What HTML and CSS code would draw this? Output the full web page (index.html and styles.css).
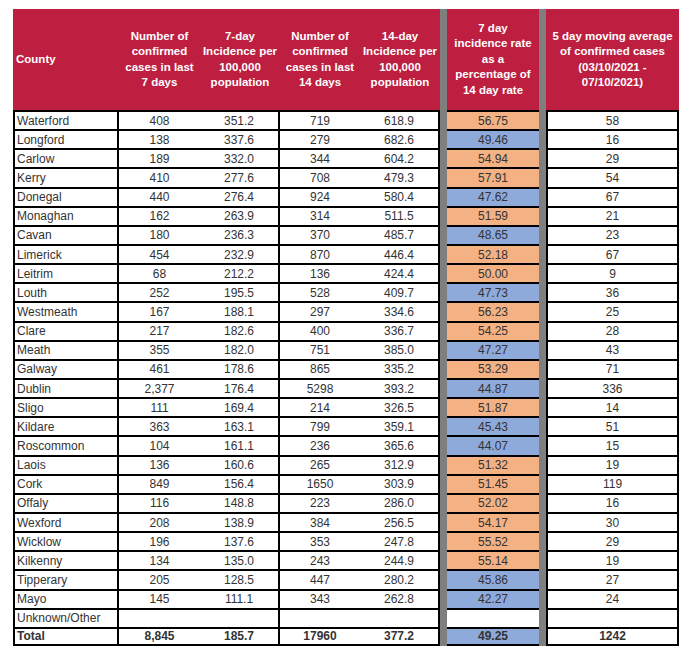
FILE: index.html
```html
<!DOCTYPE html>
<html>
<head>
<meta charset="utf-8">
<link rel="stylesheet" href="styles.css">
</head>
<body>
<div class="tbl">
  <div class="h hc">County</div>
  <div class="h">Number of<br>confirmed<br>cases in last<br>7 days</div>
  <div class="h">7-day<br>Incidence per<br>100,000<br>population</div>
  <div class="h">Number of<br>confirmed<br>cases in last<br>14 days</div>
  <div class="h">14-day<br>Incidence per<br>100,000<br>population</div>
  <div class="sep s1"></div>
  <div class="h">7 day<br>incidence rate<br>as a<br>percentage of<br>14 day rate</div>
  <div class="sep s2"></div>
  <div class="h">5 day moving average<br>of confirmed cases<br>(03/10/2021 -<br>07/10/2021)</div>

  <div class="c">Waterford</div><div class="n">408</div><div class="n b3">351.2</div><div class="n">719</div><div class="n b5">618.9</div><div class="p o">56.75</div><div class="a">58</div>
  <div class="c">Longford</div><div class="n">138</div><div class="n b3">337.6</div><div class="n">279</div><div class="n b5">682.6</div><div class="p u">49.46</div><div class="a">16</div>
  <div class="c">Carlow</div><div class="n">189</div><div class="n b3">332.0</div><div class="n">344</div><div class="n b5">604.2</div><div class="p o">54.94</div><div class="a">29</div>
  <div class="c">Kerry</div><div class="n">410</div><div class="n b3">277.6</div><div class="n">708</div><div class="n b5">479.3</div><div class="p o">57.91</div><div class="a">54</div>
  <div class="c">Donegal</div><div class="n">440</div><div class="n b3">276.4</div><div class="n">924</div><div class="n b5">580.4</div><div class="p u">47.62</div><div class="a">67</div>
  <div class="c">Monaghan</div><div class="n">162</div><div class="n b3">263.9</div><div class="n">314</div><div class="n b5">511.5</div><div class="p o">51.59</div><div class="a">21</div>
  <div class="c">Cavan</div><div class="n">180</div><div class="n b3">236.3</div><div class="n">370</div><div class="n b5">485.7</div><div class="p u">48.65</div><div class="a">23</div>
  <div class="c">Limerick</div><div class="n">454</div><div class="n b3">232.9</div><div class="n">870</div><div class="n b5">446.4</div><div class="p o">52.18</div><div class="a">67</div>
  <div class="c">Leitrim</div><div class="n">68</div><div class="n b3">212.2</div><div class="n">136</div><div class="n b5">424.4</div><div class="p o">50.00</div><div class="a">9</div>
  <div class="c">Louth</div><div class="n">252</div><div class="n b3">195.5</div><div class="n">528</div><div class="n b5">409.7</div><div class="p u">47.73</div><div class="a">36</div>
  <div class="c">Westmeath</div><div class="n">167</div><div class="n b3">188.1</div><div class="n">297</div><div class="n b5">334.6</div><div class="p o">56.23</div><div class="a">25</div>
  <div class="c">Clare</div><div class="n">217</div><div class="n b3">182.6</div><div class="n">400</div><div class="n b5">336.7</div><div class="p o">54.25</div><div class="a">28</div>
  <div class="c">Meath</div><div class="n">355</div><div class="n b3">182.0</div><div class="n">751</div><div class="n b5">385.0</div><div class="p u">47.27</div><div class="a">43</div>
  <div class="c">Galway</div><div class="n">461</div><div class="n b3">178.6</div><div class="n">865</div><div class="n b5">335.2</div><div class="p o">53.29</div><div class="a">71</div>
  <div class="c">Dublin</div><div class="n">2,377</div><div class="n b3">176.4</div><div class="n">5298</div><div class="n b5">393.2</div><div class="p u">44.87</div><div class="a">336</div>
  <div class="c">Sligo</div><div class="n">111</div><div class="n b3">169.4</div><div class="n">214</div><div class="n b5">326.5</div><div class="p o">51.87</div><div class="a">14</div>
  <div class="c">Kildare</div><div class="n">363</div><div class="n b3">163.1</div><div class="n">799</div><div class="n b5">359.1</div><div class="p u">45.43</div><div class="a">51</div>
  <div class="c">Roscommon</div><div class="n">104</div><div class="n b3">161.1</div><div class="n">236</div><div class="n b5">365.6</div><div class="p u">44.07</div><div class="a">15</div>
  <div class="c">Laois</div><div class="n">136</div><div class="n b3">160.6</div><div class="n">265</div><div class="n b5">312.9</div><div class="p o">51.32</div><div class="a">19</div>
  <div class="c">Cork</div><div class="n">849</div><div class="n b3">156.4</div><div class="n">1650</div><div class="n b5">303.9</div><div class="p o">51.45</div><div class="a">119</div>
  <div class="c">Offaly</div><div class="n">116</div><div class="n b3">148.8</div><div class="n">223</div><div class="n b5">286.0</div><div class="p o">52.02</div><div class="a">16</div>
  <div class="c">Wexford</div><div class="n">208</div><div class="n b3">138.9</div><div class="n">384</div><div class="n b5">256.5</div><div class="p o">54.17</div><div class="a">30</div>
  <div class="c">Wicklow</div><div class="n">196</div><div class="n b3">137.6</div><div class="n">353</div><div class="n b5">247.8</div><div class="p o">55.52</div><div class="a">29</div>
  <div class="c">Kilkenny</div><div class="n">134</div><div class="n b3">135.0</div><div class="n">243</div><div class="n b5">244.9</div><div class="p o">55.14</div><div class="a">19</div>
  <div class="c">Tipperary</div><div class="n">205</div><div class="n b3">128.5</div><div class="n">447</div><div class="n b5">280.2</div><div class="p u">45.86</div><div class="a">27</div>
  <div class="c">Mayo</div><div class="n">145</div><div class="n b3">111.1</div><div class="n">343</div><div class="n b5">262.8</div><div class="p u">42.27</div><div class="a">24</div>
  <div class="c">Unknown/Other</div><div class="n"></div><div class="n b3"></div><div class="n"></div><div class="n b5"></div><div class="p w"></div><div class="a"></div>
  <div class="c t">Total</div><div class="n t">8,845</div><div class="n b3 t">185.7</div><div class="n t">17960</div><div class="n b5 t">377.2</div><div class="p u t">49.25</div><div class="a t">1242</div>
</div>
</body>
</html>
```
FILE: styles.css
```css
html, body {
  margin: 0;
  padding: 0;
  background: #fff;
}
body {
  font-family: "Liberation Sans", Arial, sans-serif;
}
.tbl {
  margin: 9px 0 0 13px;
  width: 666px;
  height: 637px;
  display: grid;
  grid-template-columns: 106px 81px 80px 80px 80px 7px 92px 7px 133px;
  grid-template-rows: 101px repeat(28, 1fr);
}
.h {
  background: #be1e3f;
  color: #fff;
  font-weight: bold;
  font-size: 11.5px;
  line-height: 15.5px;
  text-align: center;
  display: flex;
  align-items: center;
  justify-content: center;
}
.hc {
  justify-content: flex-start;
  padding-left: 3px;
}
.sep {
  background: #7f7f7f;
  grid-row: 1 / span 29;
}
.s1 { grid-column: 6; }
.s2 { grid-column: 8; }
.c, .n, .p, .a {
  font-size: 12px;
  color: #333;
  border-top: 2px solid #000;
  display: flex;
  align-items: center;
  justify-content: center;
  box-sizing: border-box;
  min-width: 0;
}
.c {
  justify-content: flex-start;
  padding-left: 2px;
  border-left: 2px solid #000;
  border-right: 2px solid #000;
  grid-column: 1;
}
.b3, .b5 {
  border-right: 2px solid #000;
}
.p { grid-column: 7; }
.a {
  grid-column: 9;
  border-left: 2px solid #000;
  border-right: 2px solid #000;
}
.o { background: #f4b183; }
.u { background: #8eaadb; }
.w { background: #fff; }
.t {
  font-weight: bold;
  border-bottom: 2px solid #000;
}
```
